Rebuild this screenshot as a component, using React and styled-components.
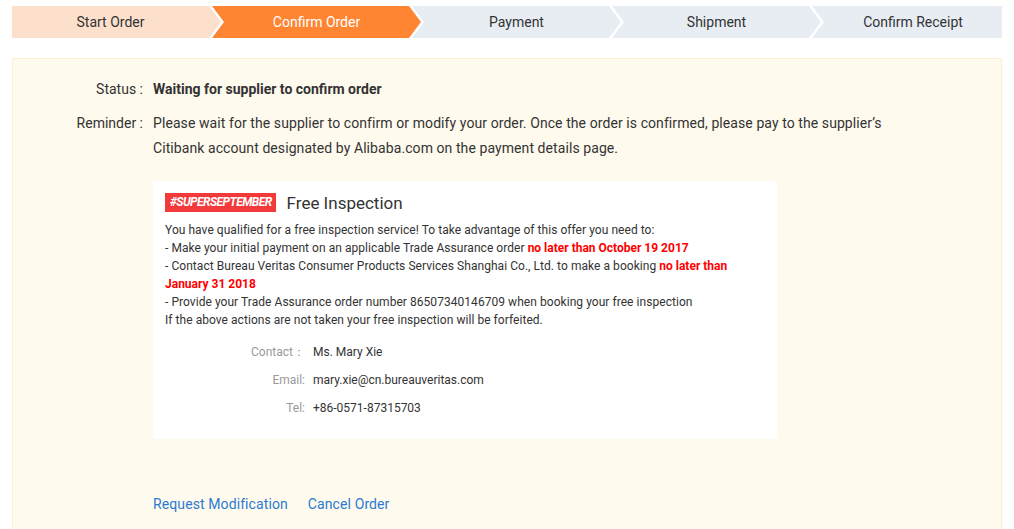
import React from 'react';
import styled, { createGlobalStyle } from 'styled-components';

const Global = createGlobalStyle`
  body {
    margin: 0;
    background: #fff;
    font-family: Roboto, "Liberation Sans", Arial, sans-serif;
    color: #333;
  }
`;

const Page = styled.div`
  padding: 6px 12px 0 12px;
  width: 990px;
`;

const Steps = styled.div`
  display: flex;
  height: 32px;
`;

const stepBg = { done: '#fde0cc', active: '#ff8533', todo: '#e8edf4' };

const Step = styled.div`
  flex: ${(p) => (p.last ? '1' : '0 0 209px')};
  box-sizing: border-box;
  display: flex;
  align-items: center;
  justify-content: center;
  font-size: 14px;
  background: ${(p) => stepBg[p.state]};
  color: ${(p) => (p.state === 'active' ? '#fff' : '#333')};
  margin-left: ${(p) => (p.first ? '0' : '-9px')};
  padding-left: ${(p) => (p.first ? '0' : '12px')};
  padding-right: ${(p) => (p.last ? '0' : '12px')};
  clip-path: ${(p) =>
    p.first
      ? 'polygon(0 0, calc(100% - 12px) 0, 100% 50%, calc(100% - 12px) 100%, 0 100%)'
      : p.last
      ? 'polygon(0 0, 100% 0, 100% 100%, 0 100%, 12px 50%)'
      : 'polygon(0 0, calc(100% - 12px) 0, 100% 50%, calc(100% - 12px) 100%, 0 100%, 12px 50%)'};
`;

const Panel = styled.div`
  margin-top: 20px;
  background: #fffaee;
  border: 1px solid #fcefd6;
  border-bottom: none;
  padding: 18px 0 40px 0;
  min-height: 440px;
  box-sizing: border-box;
`;

const Row = styled.div`
  display: flex;
  font-size: 14px;
  line-height: 25px;
  margin-bottom: 9px;
`;

const Label = styled.div`
  width: 130px;
  flex-shrink: 0;
  text-align: right;
  padding-right: 10px;
  color: #333;
`;

const Value = styled.div`
  width: 750px;
  font-weight: ${(p) => (p.bold ? 700 : 400)};
  letter-spacing: ${(p) => (p.bold ? '0' : '0.08px')};
`;

const Body = styled.div`
  margin-left: 140px;
`;

const Card = styled.div`
  margin-top: 20px;
  width: 624px;
  background: #fff;
  padding: 12px 12px 22px 12px;
  box-sizing: border-box;
`;

const CardHead = styled.div`
  display: flex;
  align-items: center;
  gap: 11px;
  height: 19px;
  margin-bottom: 9px;
`;

const Tag = styled.span`
  background: #f23a3a;
  color: #fff;
  font-style: italic;
  font-weight: 700;
  font-size: 12px;
  line-height: 19px;
  padding: 0 4px 0 5px;
  letter-spacing: -0.55px;
`;

const CardTitle = styled.span`
  font-size: 17px;
  color: #333;
`;

const Text = styled.div`
  font-size: 12px;
  line-height: 18px;
  color: #333;
  letter-spacing: 0.05px;
`;

const Hot = styled.span`
  color: #f00;
  font-weight: 700;
  letter-spacing: 0;
`;

const Contacts = styled.div`
  margin-top: 14px;
  display: grid;
  grid-template-columns: 140px 1fr;
  column-gap: 8px;
  row-gap: 10px;
  font-size: 12px;
  line-height: 18px;
`;

const CLabel = styled.div`
  text-align: right;
  color: #999;
`;

const CValue = styled.div`
  color: #333;
`;

const Links = styled.div`
  display: flex;
  gap: 20px;
  margin-top: 57px;
  font-size: 14px;
  letter-spacing: 0.1px;
`;

const Link = styled.a`
  color: #2b7bd1;
  text-decoration: none;
  cursor: pointer;
`;

const steps = [
  ['Start Order', 'done'],
  ['Confirm Order', 'active'],
  ['Payment', 'todo'],
  ['Shipment', 'todo'],
  ['Confirm Receipt', 'todo'],
];

export default function App() {
  return (
    <Page>
      <Global />
      <Steps>
        {steps.map(([name, state], i) => (
          <Step key={name} state={state} first={i === 0} last={i === steps.length - 1}>
            {name}
          </Step>
        ))}
      </Steps>
      <Panel>
        <Row>
          <Label>Status :</Label>
          <Value bold>Waiting for supplier to confirm order</Value>
        </Row>
        <Row>
          <Label>Reminder :</Label>
          <Value>
            Please wait for the supplier to confirm or modify your order. Once the order is confirmed, please pay to the supplier’s
            Citibank account designated by Alibaba.com on the payment details page.
          </Value>
        </Row>
        <Body>
          <Card>
            <CardHead>
              <Tag>#SUPERSEPTEMBER</Tag>
              <CardTitle>Free Inspection</CardTitle>
            </CardHead>
            <Text>You have qualified for a free inspection service! To take advantage of this offer you need to:</Text>
            <Text>
              - Make your initial payment on an applicable Trade Assurance order <Hot>no later than October 19 2017</Hot>
            </Text>
            <Text>
              - Contact Bureau Veritas Consumer Products Services Shanghai Co., Ltd. to make a booking <Hot>no later than January 31 2018</Hot>
            </Text>
            <Text>- Provide your Trade Assurance order number 86507340146709 when booking your free inspection</Text>
            <Text>If the above actions are not taken your free inspection will be forfeited.</Text>
            <Contacts>
              <CLabel>Contact：</CLabel>
              <CValue>Ms. Mary Xie</CValue>
              <CLabel>Email:</CLabel>
              <CValue>mary.xie@cn.bureauveritas.com</CValue>
              <CLabel>Tel:</CLabel>
              <CValue>+86-0571-87315703</CValue>
            </Contacts>
          </Card>
          <Links>
            <Link>Request Modification</Link>
            <Link>Cancel Order</Link>
          </Links>
        </Body>
      </Panel>
    </Page>
  );
}
